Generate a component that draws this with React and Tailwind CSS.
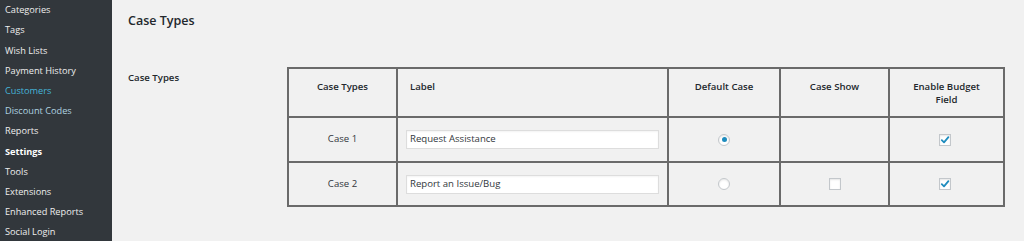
import React from "react";

const menu = [
  { t: "Categories" },
  { t: "Tags" },
  { t: "Wish Lists" },
  { t: "Payment History" },
  { t: "Customers", c: "text-[#45b5da]" },
  { t: "Discount Codes", c: "text-[#b0d3e0]" },
  { t: "Reports" },
  { t: "Settings", c: "text-white font-bold" },
  { t: "Tools" },
  { t: "Extensions" },
  { t: "Enhanced Reports" },
  { t: "Social Login" },
];

function Radio({ on }) {
  return (
    <span className="inline-flex w-[12px] h-[12px] rounded-full border border-[#c3c7cb] bg-white items-center justify-center shadow-[inset_0_1px_2px_rgba(0,0,0,0.1)]">
      {on && <span className="w-[5px] h-[5px] rounded-full bg-[#1e8cbe]" />}
    </span>
  );
}

function Check({ on }) {
  return (
    <span className="inline-flex w-[12px] h-[12px] border border-[#c3c7cb] bg-white items-center justify-center shadow-[inset_0_1px_2px_rgba(0,0,0,0.1)]">
      {on && (
        <svg width="10" height="10" viewBox="0 0 10 10">
          <path d="M1.8 5.2 L4 7.4 L8.4 2.2" fill="none" stroke="#1e8cbe" strokeWidth="1.8" strokeLinecap="round" strokeLinejoin="round" />
        </svg>
      )}
    </span>
  );
}

const cell = "border-2 border-[#6a6a6a]";

export default function App() {
  return (
    <div className="flex w-[1024px] h-[241px] overflow-hidden bg-[#f1f1f1] font-['Open_Sans',sans-serif]">
      <div className="w-[112px] shrink-0 bg-[#32373c] pl-[5px]">
        {menu.map((m) => (
          <div key={m.t} className={`h-[20.2px] flex items-center text-[9.2px] ${m.c || "text-[#eeeeee]"}`}>
            {m.t}
          </div>
        ))}
      </div>
      <div className="flex-1 pl-[16px] text-[#23282d]">
        <div className="pt-[12px] text-[12.5px] font-semibold leading-[18px] text-[#23282d]">Case Types</div>
        <div className="flex mt-[37px]">
          <div className="w-[159px] shrink-0 text-[9.6px] font-semibold pt-[4px]">Case Types</div>
          <table className="table-fixed border-collapse w-[716px] text-[9.6px]">
            <colgroup>
              <col className="w-[109px]" />
              <col className="w-[271px]" />
              <col className="w-[112px]" />
              <col className="w-[109px]" />
              <col className="w-[115px]" />
            </colgroup>
            <thead>
              <tr className="h-[49px]">
                <th className={`${cell} align-top pt-[11px] font-semibold text-center`}>Case Types</th>
                <th className={`${cell} align-top pt-[11px] font-semibold text-left pl-[12px]`}>Label</th>
                <th className={`${cell} align-top pt-[11px] font-semibold text-center`}>Default Case</th>
                <th className={`${cell} align-top pt-[11px] font-semibold text-center`}>Case Show</th>
                <th className={`${cell} align-top pt-[11px] font-semibold text-center leading-[13px]`}>
                  Enable Budget
                  <br />
                  Field
                </th>
              </tr>
            </thead>
            <tbody>
              {[
                { n: "Case 1", l: "Request Assistance", r: true, showS: false },
                { n: "Case 2", l: "Report an Issue/Bug", r: false, showS: true },
              ].map((row, i) => (
                <tr key={row.n} className={i === 0 ? "h-[45px]" : "h-[44px]"}>
                  <td className={`${cell} text-center text-[#32373c]`}>{row.n}</td>
                  <td className={`${cell} pl-[8px] pr-[8px]`}>
                    <div className="h-[19px] bg-white border border-[#dddddd] flex items-center pl-[3px] text-[#32373c] shadow-[inset_0_1px_2px_rgba(0,0,0,0.05)]">
                      {row.l}
                    </div>
                  </td>
                  <td className={`${cell} text-center`}>
                    <div className="flex justify-center">
                      <Radio on={row.r} />
                    </div>
                  </td>
                  <td className={`${cell} text-center`}>
                    <div className="flex justify-center">{row.showS && <Check on={false} />}</div>
                  </td>
                  <td className={`${cell} text-center`}>
                    <div className="flex justify-center pr-[3px]">
                      <Check on />
                    </div>
                  </td>
                </tr>
              ))}
            </tbody>
          </table>
        </div>
      </div>
    </div>
  );
}
